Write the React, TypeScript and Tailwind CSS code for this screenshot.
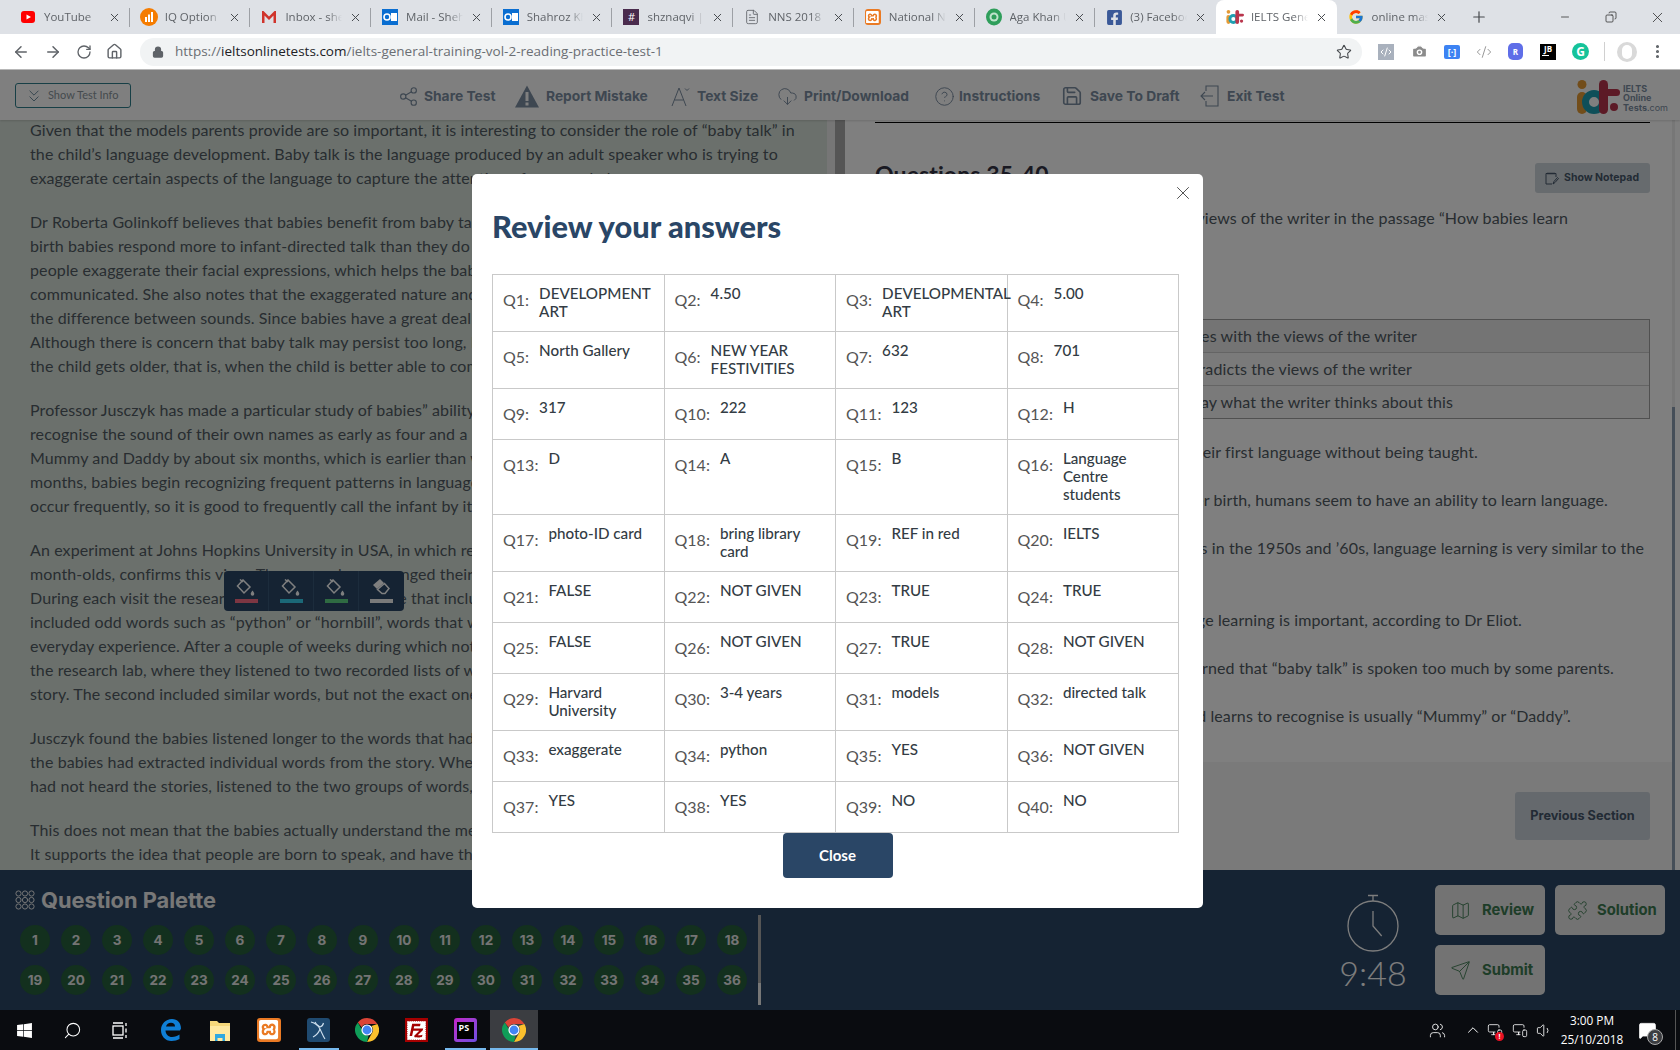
import React from 'react';
import { ArrowLeft, ArrowRight, RotateCw, Home, Star, Lock, Plus, X, Minus, Share2, CloudDownload, HelpCircle, Save, ChevronsDown, Map as MapIcon, Puzzle, Send, Camera, CodeXml, MoreVertical, Copy, ChevronUp, Volume1, Users, MonitorSmartphone, FileText, Search, MessageSquare } from 'lucide-react';
import { FaFacebookSquare, FaWindows } from 'react-icons/fa';
import { FcGoogle } from 'react-icons/fc';
import { SiXampp, SiFilezilla } from 'react-icons/si';

const YT = () => (<svg width="16" height="16" viewBox="0 0 16 16"><rect x="1" y="2" width="14" height="12" rx="3" fill="#f00" /><path d="M6.5 5.5 11 8l-4.5 2.5z" fill="#fff" /></svg>);
const IQ = () => (<svg width="18" height="18" viewBox="0 0 18 18"><circle cx="9" cy="9" r="9" fill="#f57c00" /><rect x="5" y="9" width="2" height="5" fill="#fff" /><rect x="8" y="6.5" width="2" height="7.5" fill="#fff" /><rect x="11" y="4" width="2" height="10" fill="#fff" /></svg>);
const GM = () => (<svg width="16" height="14" viewBox="0 0 16 14"><path d="M1 13V1h1.5L8 6.5 13.5 1H15v12h-2.5V5.5L8 10 3.500 5.500V13z" fill="#d0342c" /></svg>);
const OL = () => (<svg width="16" height="16" viewBox="0 0 16 16"><rect width="16" height="16" fill="#0a6ed1" /><rect x="9" y="4" width="6" height="8" fill="#fff" /><circle cx="5" cy="8" r="3" fill="none" stroke="#fff" strokeWidth="1.600" /></svg>);
const SL = () => (<div className="w-4 h-4 bg-[#4a2b4d] text-white text-[11px] leading-4 text-center">#</div>);
const XP = ({ s = 16 }: { s?: number }) => (<div className="rounded-[3px] bg-[#ea7a24] flex items-center justify-center text-white" style={{ width: s, height: s }}><SiXampp size={s * 0.8} /></div>);
const AK = () => (<svg width="16" height="18" viewBox="0 0 16 18"><ellipse cx="8" cy="9" rx="8" ry="8.500" fill="#2f9e5b" /><circle cx="8" cy="9" r="4.500" fill="#bfe3cc" /><circle cx="8" cy="9" r="2.500" fill="#2f9e5b" /></svg>);
const IOT = ({ s = 16 }: { s?: number }) => (
  <svg width={s} height={s * 34 / 44} viewBox="0 0 44 34">
    <circle cx="6" cy="4.500" r="4.500" fill="#e59a35" />
    <rect x="1" y="12" width="10" height="22" rx="5" fill="#e59a35" />
    <circle cx="18" cy="22" r="8.500" fill="none" stroke="#1f9fb2" strokeWidth="7" />
    <rect x="23" y="0" width="9" height="34" rx="4.500" fill="#b9354c" />
    <rect x="27" y="9" width="17" height="7" rx="3.500" fill="#b9354c" />
    <circle cx="38" cy="27" r="4" fill="#b9354c" />
  </svg>
);
const ChromeLogo = ({ s = 24 }: { s?: number }) => (
  <svg width={s} height={s} viewBox="0 0 24 24">
    <path d="M12 0a12 12 0 0 1 10.400 6H12a6 6 0 0 0-5.300 3.200L2.800 4.400A12 12 0 0 1 12 0z" fill="#db4437" />
    <path d="M22.400 6A12 12 0 0 1 12 24l4.900-8.700A6 6 0 0 0 16.500 8z" fill="#fbc02d" />
    <path d="M12 24A12 12 0 0 1 2.800 4.400l4.900 8.700a6 6 0 0 0 5.800 4.700z" fill="#0f9d58" />
    <circle cx="12" cy="12" r="5" fill="#4285f4" stroke="#fff" strokeWidth="1.200" />
  </svg>
);

const tabs: [string, React.ReactNode][] = [
  ['YouTube', <YT />], ['IQ Option', <IQ />], ['Inbox - shehroz', <GM />], ['Mail - Shehroz', <OL />], ['Shahroz Khan', <OL />], ['shznaqvi | Jira', <SL />],
  ['NNS 2018 report', <FileText size={16} strokeWidth={1.300} className="text-[#5f6368]" />], ['National NNS', <XP />], ['Aga Khan Uni', <AK />], ['(3) Facebook', <FaFacebookSquare size={17} className="text-[#3b5998]" />], ['IELTS General', <IOT s={18} />], ['online mastering', <FcGoogle size={16} />],
];

function Tab({ title, icon, active, last }: { title: string; icon: React.ReactNode; active: boolean; last: boolean }) {
  return (
    <div className={`relative flex items-center h-[34px] w-[120.700px] shrink-0 pl-[10px] pr-[9px] gap-[7px] ${active ? 'bg-white rounded-t-[8px]' : ''}`}>
      <div className="w-[18px] flex justify-center shrink-0">{icon}</div>
      <div className="flex-1 min-w-0 overflow-hidden whitespace-nowrap text-[11.500px] text-[#5f6368] [mask-image:linear-gradient(to_right,black_75%,transparent_100%)]">{title}</div>
      <X size={13} strokeWidth={1.800} className="text-[#45484c] shrink-0" />
      {!active && !last && <div className="absolute right-0 top-[8px] h-[19px] w-px bg-[#9da0a5]" />}
    </div>
  );
}

function TabStrip() {
  return (
    <div className="h-[34px] bg-[#dee1e6] flex items-center pl-[9px] font-['Open_Sans',sans-serif]">
      {tabs.map(([t, i], n) => <Tab key={n} title={t} icon={i} active={n === 10} last={n === 9 || n === 11} />)}
      <Plus size={18} strokeWidth={1.600} className="text-[#45484c] ml-[13px]" />
      <div className="ml-auto flex items-center text-[#2b2b2b]">
        <div className="w-[46px] flex justify-center"><Minus size={12} strokeWidth={1.500} /></div>
        <div className="w-[46px] flex justify-center"><Copy size={12} strokeWidth={1.500} className="-scale-x-100" /></div>
        <div className="w-[46px] flex justify-center"><X size={17} strokeWidth={1.100} /></div>
      </div>
    </div>
  );
}

function AddressBar() {
  return (
    <div className="h-[36px] bg-white flex items-center font-['Open_Sans',sans-serif] text-[#5f6368] border-b border-[#b9b9b9]">
      <div className="w-[140px] flex items-center pl-[12px] gap-[14px]">
        <ArrowLeft size={18} /><ArrowRight size={18} /><RotateCw size={16} /><Home size={17} />
      </div>
      <div className="w-[1222px] h-[28px] rounded-full bg-[#f1f3f4] flex items-center pl-[12px] pr-[10px]">
        <Lock size={12} strokeWidth={2.500} fill="#5f6368" />
        <div className="ml-[11px] text-[13.500px] whitespace-nowrap text-[#6a6e73]">https://<span className="text-[#202124]">ieltsonlinetests.com</span>/ielts-general-training-vol-2-reading-practice-test-1</div>
        <Star size={16} strokeWidth={1.600} className="ml-auto text-[#45484c]" />
      </div>
      <div className="flex items-center ml-[16px] h-full">
        <div className="w-[16px] h-[16px] bg-[#a9b1bd] text-white flex items-center justify-center"><CodeXml size={12} /></div>
        <div className="ml-[17px] w-[17px]"><Camera size={17} fill="#8b8b8b" stroke="#fff" className="text-white" /></div>
        <div className="ml-[16px] w-[16px] h-[14px] rounded-[2px] bg-[#3d83f3] text-white text-[9px] leading-[14px] text-center font-bold">[·]</div>
        <CodeXml size={16} strokeWidth={1.200} className="ml-[16px] text-[#7d7d7d]" />
        <div className="ml-[16px] w-[15px] h-[17px] rounded-[5px] bg-[#5f6ee8] text-white text-[8px] leading-[17px] text-center font-bold">R</div>
        <div className="ml-[17px] w-[16px] h-[16px] bg-black text-white text-[8px] leading-[10px] text-center font-bold">JB<div className="w-[7px] h-px bg-white ml-[2px] mt-[1px]" /></div>
        <div className="ml-[16px] w-[17px] h-[17px] rounded-full bg-[#15c39a] text-white text-[12px] leading-[17px] text-center font-bold">G</div>
        <div className="ml-[15px] w-px h-[19px] bg-[#d0d0d0]" />
        <div className="ml-[12px] w-[20px] h-[20px] rounded-full bg-[#d9d9d9] flex items-center justify-center"><div className="w-[10px] h-[14px] rounded-full bg-white" /></div>
        <MoreVertical size={17} strokeWidth={2.400} className="ml-[12px] text-[#5f6368]" />
      </div>
    </div>
  );
}

const hdrText = "text-[13.800px] font-bold text-[#7c8ea2] whitespace-nowrap";

function TriangleIcon() {
  return (<svg width="24" height="23" viewBox="0 0 24 23"><path d="M12 0.500 24 22.500H0z" fill="#7c8ea2" /><rect x="10.500" y="7" width="3" height="9" fill="#fff" /><rect x="10.500" y="17.500" width="3" height="3" fill="#fff" /></svg>);
}
function TextSizeIcon() {
  return (<svg width="20" height="22" viewBox="0 0 20 22" fill="none" stroke="#7c8ea2" strokeWidth="1"><path d="M1 21 8 3l7 18M3.500 15h9" /><path d="M14 3.500 16 5.500 18 3.500" /></svg>);
}
function ExitIcon() {
  return (<svg width="19" height="22" viewBox="0 0 19 22" fill="none" stroke="#7c8ea2" strokeWidth="1.100"><path d="M6 6V1h12v20H6v-5" /><path d="M13 11H1M5 7l-4 4 4 4" /></svg>);
}

const actions: [string, string, React.ReactNode][] = [
  ['Share Test', 'w-[117px] gap-[5px]', <Share2 size={21} strokeWidth={1.300} className="text-[#7c8ea2]" />],
  ['Report Mistake', 'w-[156px] gap-[7px] pt-[1px]', <TriangleIcon />],
  ['Text Size', 'w-[106px] gap-[6px]', <TextSizeIcon />],
  ['Print/Download', 'w-[157px] gap-[6px]', <CloudDownload size={21} strokeWidth={1.100} className="text-[#7c8ea2]" />],
  ['Instructions', 'w-[127px] gap-[4px]', <HelpCircle size={21} strokeWidth={1.100} className="text-[#7c8ea2]" />],
  ['Save To Draft', 'w-[139px] gap-[7px]', <Save size={22} strokeWidth={1.800} className="text-[#7c8ea2]" />],
  ['Exit Test', 'w-[95px] gap-[8px]', <ExitIcon />],
];

function TestHeader() {
  return (
    <div className="h-[50px] bg-white flex items-center pl-[15px] font-['Inter',sans-serif] shadow-[0_1px_2px_rgba(0,0,0,0.15)] z-10">
      <div className="w-[116px] h-[25px] mt-[1px] border border-[#2f7f8c] rounded-[3px] flex items-center pl-[8px] gap-[4px] text-[11px] text-[#8a959c] font-['Lato',sans-serif]">
        <ChevronsDown size={20} strokeWidth={1.200} className="text-[#6f8ea0]" />Show Test Info
      </div>
      <div className="flex items-center ml-[267px] mt-[2px]">
        {actions.map(([t, c, i]) => <div key={t} className={`flex items-center shrink-0 ${c}`}>{i}<span className={hdrText}>{t}</span></div>)}
      </div>
      <div className="ml-auto pr-[12px] flex items-center gap-[3px] mt-[3px]">
        <IOT s={44} />
        <div className="text-[#7c8ea2] text-[9px] leading-[9.500px] font-bold pt-[3px]">IELTS<br />Online<br />Tests<span className="font-normal">.com</span></div>
      </div>
    </div>
  );
}

const passage: string[][] = [
  ['Given that the models parents provide are so important, it is interesting to consider the role of “baby talk” in', 'the child’s language development. Baby talk is the language produced by an adult speaker who is trying to', 'exaggerate certain aspects of the language to capture the attention of a young baby.'],
  ['Dr Roberta Golinkoff believes that babies benefit from baby talk because it is easier for them to follow. From', 'birth babies respond more to infant-directed talk than they do to adult-directed talk. When using baby talk,', 'people exaggerate their facial expressions, which helps the baby to begin to associate what is being', 'communicated. She also notes that the exaggerated nature and repetition of baby talk helps infants to learn', 'the difference between sounds. Since babies have a great deal of information to process, baby talk helps.', 'Although there is concern that baby talk may persist too long, Dr Golinkoff says that it stops being used as', 'the child gets older, that is, when the child is better able to communicate with the parents.'],
  ['Professor Jusczyk has made a particular study of babies” ability to recognise sounds, and says that they', 'recognise the sound of their own names as early as four and a half months. Babies know the sound of', 'Mummy and Daddy by about six months, which is earlier than was previously thought. By about eight', 'months, babies begin recognizing frequent patterns in language. A child will pick up on words that', 'occur frequently, so it is good to frequently call the infant by its name.'],
  ['An experiment at Johns Hopkins University in USA, in which researchers went to the homes of 16 nine-', 'month-olds, confirms this view. The researchers arranged their visits for ten days out of a two week period.', 'During each visit the researcher played an audio tape that included the same three stories. The stories', 'included odd words such as “python” or “hornbill”, words that were unlikely to be encountered in the babies’', 'everyday experience. After a couple of weeks during which nothing was done, the babies were brought to', 'the research lab, where they listened to two recorded lists of words. The first list included words heard in the', 'story. The second included similar words, but not the exact ones that were used in the stories.'],
  ['Jusczyk found the babies listened longer to the words that had appeared in the stories, which indicated that', 'the babies had extracted individual words from the story. When a control group of 16 nine-month-olds, who', 'had not heard the stories, listened to the two groups of words, they showed no preference.'],
  ['This does not mean that the babies actually understand the meanings of the words, just the sound patterns.', 'It supports the idea that people are born to speak, and have the capacity to learn language from birth.'],
];

const Bucket = () => (
  <svg width="20" height="19" viewBox="0 0 20 19" fill="none" stroke="#fff" strokeWidth="1.500"><path d="M7 1 1.500 7 8 14l6-6z" /><path d="M4 0.500 7 3" /><path d="M16.500 11.500c1.500 2 1.800 2.700 1.800 3.500a1.800 1.800 0 0 1-3.600 0c0-.8.300-1.500 1.800-3.500z" fill="#fff" stroke="none" /></svg>
);
const Eraser = () => (
  <svg width="20" height="19" viewBox="0 0 20 19"><path d="M8 0 1 6l4 4 7-6z" fill="#fff" /><path d="M5.500 10.500 12.500 4.500l4.500 5-4 5h-3z" fill="none" stroke="#fff" strokeWidth="1.500" /></svg>
);

function HighlightBar() {
  const items: [React.ReactNode, string][] = [[<Bucket />, 'bg-[#fb6c84]'], [<Bucket />, 'bg-[#36d0ee]'], [<Bucket />, 'bg-[#5ed684]'], [<Eraser />, 'bg-[#f4f4f4]']];
  return (
    <div className="absolute left-[224px] top-[451px] w-[180px] h-[40px] rounded-[4px] bg-[#2a4666] flex">
      {items.map(([ic, c], i) => (
        <div key={i} className={`w-[45px] h-full flex flex-col items-center pt-[8px] ${i < 3 ? 'border-r border-[#385878]' : ''}`}>
          {ic}
          <div className={`w-[23px] h-[4px] mt-[1px] ${c}`} />
        </div>
      ))}
    </div>
  );
}

function LeftPane() {
  return (
    <div className="relative w-[827px] shrink-0 bg-[#d7e1d9] overflow-hidden pl-[30px] font-['Lato',sans-serif] text-[16px] leading-[24px] tracking-[0.11px] text-[#505a62]">
      <div className="-mt-[2px] flex flex-col gap-[20px]">
        {passage.map((p, i) => (
          <div key={i}>{p.map((l, j) => <div key={j} className="whitespace-nowrap">{l}</div>)}</div>
        ))}
      </div>
      <HighlightBar />
    </div>
  );
}

const stmts: [string, string][] = [
  ['35   Children are able to learn their first language without being taught.', 'pr-[172px]'],
  ['36   From a very short time after birth, humans seem to have an ability to learn language.', 'pr-[42px]'],
  ['37   According to researchers in the 1950s and ’60s, language learning is very similar to the', 'pr-[6px]'],
  ['38   Adult attention to early language learning is important, according to Dr Eliot.', 'pr-[128px]'],
  ['39   Some experts are concerned that “baby talk” is spoken too much by some parents.', 'pr-[36px]'],
  ['40   The first word a child learns to recognise is usually “Mummy” or “Daddy”.', 'pr-[79px]'],
];

function RightPane() {
  return (
    <div className="flex-1 bg-white flex flex-col font-['Lato',sans-serif] text-[16px] leading-[24px] tracking-[0.11px] text-[#505a62] min-w-0">
      <div className="flex-1 pl-[30px] pr-[22px]">
        <div className="h-[3px] border-b border-[#000]" />
        <div className="mt-[40px] flex justify-between items-start h-[30px]">
          <div className="-mt-[4px] text-[23px] leading-[30px] font-bold text-[#334]">Questions 35-40</div>
          <div className="w-[115px] h-[30px] rounded-[3px] bg-[#cfd6dc] flex items-center pl-[10px] gap-[5px] font-['Inter',sans-serif] text-[10.500px] tracking-normal font-bold text-[#46566a]">
            <svg width="14" height="13" viewBox="0 0 14 13" fill="none" stroke="#46566a" strokeWidth="1"><path d="M11 5V1.500H1V12h6" /><path d="M3 .5v2M5 .5v2M7 .5v2M9 .5v2" /><path d="m8 12 1-2.500 3.500-4 1 1-3.500 4z" /></svg>
            Show Notepad
          </div>
        </div>
        <div className="mt-[13px] whitespace-nowrap text-right pr-[82px]">Do the following statements agree with the views of the writer in the passage “How babies learn</div>
        <div className="text-left">language”?</div>
        <div className="mt-[65px] border border-[#a0a0a0] text-right">
          <div className="h-[33px] leading-[31px] bg-[#e8e8e8] border-b border-[#c8c8c8] pr-[232px] whitespace-nowrap">if the statement agrees with the views of the writer</div>
          <div className="h-[33px] leading-[31px] bg-[#f4f4f4] border-b border-[#c8c8c8] pr-[237px] whitespace-nowrap">if the statement contradicts the views of the writer</div>
          <div className="h-[32px] leading-[31px] bg-[#f4f4f4] pr-[196px] whitespace-nowrap">if it is impossible to say what the writer thinks about this</div>
        </div>
        <div className="mt-[21px] flex flex-col gap-[24px]">
          {stmts.map(([l, c], i) => (
            <div key={i}>
              <div className={`whitespace-pre text-right ${c}`}>{l}</div>
              {i === 2 && <div>development of other skills.</div>}
            </div>
          ))}
        </div>
      </div>
      <div className="h-[108px] bg-[#f5f5f5] flex justify-end pt-[30px] pr-[22px]">
        <div className="w-[135px] h-[48px] rounded-[3px] bg-[#cbd2da] flex items-center justify-center font-['Inter',sans-serif] text-[12.700px] tracking-normal font-bold text-[#45566a]">Previous Section</div>
      </div>
    </div>
  );
}

const nums = Array.from({ length: 36 }, (_, i) => i + 1);

function Footer() {
  return (
    <div className="h-[140px] bg-[#2a4666] flex font-['Inter',sans-serif]">
      <div className="w-[761px] shrink-0">
        <div className="h-[45px] pl-[15px] flex items-center gap-[6px] pt-[15px]">
          <svg width="20" height="20" viewBox="0 0 20 20" fill="none" stroke="#ededed" strokeWidth="1">
            {[3.500, 10, 16.500].flatMap(y => [3.500, 10, 16.500].map(x => <circle key={`${x}-${y}`} cx={x} cy={y} r="2.600" />))}
          </svg>
          <span className="text-[21.800px] font-bold text-[#f0f0f0] whitespace-nowrap">Question Palette</span>
        </div>
        <div className="flex pl-[20px]">
          <div className="w-[738px] pt-[10px] flex flex-wrap content-start gap-x-[11px] gap-y-[10px]">
            {nums.map(n => (
              <div key={n} className="w-[30px] h-[30px] rounded-full bg-[#26603c] flex items-center justify-center text-[13.500px] font-bold text-[#e8e8e8]">{n}</div>
            ))}
          </div>
          <div className="w-[3px] h-[90px] bg-[#aaa] flex flex-col justify-end"><div className="h-[22px] bg-[#eee]" /></div>
        </div>
      </div>
      <div className="ml-[572px] w-[80px] flex flex-col items-center pt-[24px]">
        <svg width="54" height="58" viewBox="0 0 54 58" fill="none" stroke="#fafafa" strokeWidth="1.300">
          <circle cx="27" cy="32" r="25" /><path d="M27 7V2M22 1.500h10" /><path d="M27 17v15l8.700 10" />
        </svg>
        <div className="mt-[1px] text-[34px] leading-[40px] font-['Lato',sans-serif] font-light text-[#fafafa]">9:48</div>
      </div>
      <div className="ml-[22px] pt-[15px] grid grid-cols-[110px_110px] grid-rows-[50px_50px] gap-[10px] font-['Inter',sans-serif] text-[14.800px] font-bold text-[#3c7a50]">
        <div className="rounded-[5px] bg-[#e6e6e6] flex items-center pl-[15px] gap-[11px]"><MapIcon size={21} strokeWidth={1} />Review</div>
        <div className="rounded-[5px] bg-[#e6e6e6] flex items-center pl-[12px] gap-[9px]"><Puzzle size={21} strokeWidth={1} />Solution</div>
        <div className="rounded-[5px] bg-[#e6e6e6] flex items-center pl-[15px] gap-[11px]"><Send size={21} strokeWidth={1} />Submit</div>
      </div>
    </div>
  );
}

const rows: [string, string[]][] = [
  ['Q1', ['DEVELOPMENT', 'ART']], ['Q2', ['4.50']], ['Q3', ['DEVELOPMENTAL', 'ART']], ['Q4', ['5.00']],
  ['Q5', ['North Gallery']], ['Q6', ['NEW YEAR', 'FESTIVITIES']], ['Q7', ['632']], ['Q8', ['701']],
  ['Q9', ['317']], ['Q10', ['222']], ['Q11', ['123']], ['Q12', ['H']],
  ['Q13', ['D']], ['Q14', ['A']], ['Q15', ['B']], ['Q16', ['Language', 'Centre', 'students']],
  ['Q17', ['photo-ID card']], ['Q18', ['bring library', 'card']], ['Q19', ['REF in red']], ['Q20', ['IELTS']],
  ['Q21', ['FALSE']], ['Q22', ['NOT GIVEN']], ['Q23', ['TRUE']], ['Q24', ['TRUE']],
  ['Q25', ['FALSE']], ['Q26', ['NOT GIVEN']], ['Q27', ['TRUE']], ['Q28', ['NOT GIVEN']],
  ['Q29', ['Harvard', 'University']], ['Q30', ['3-4 years']], ['Q31', ['models']], ['Q32', ['directed talk']],
  ['Q33', ['exaggerate']], ['Q34', ['python']], ['Q35', ['YES']], ['Q36', ['NOT GIVEN']],
  ['Q37', ['YES']], ['Q38', ['YES']], ['Q39', ['NO']], ['Q40', ['NO']],
];

function Modal() {
  return (
    <div className="absolute left-[472px] top-[104px] w-[731px] h-[734px] bg-white rounded-[5px] font-['Lato',sans-serif] flex flex-col items-center">
      <X size={22} strokeWidth={1} className="absolute right-[9px] top-[8px] text-[#444]" />
      <div className="self-start pl-[20px] h-[100px] pt-[34px] text-[30.800px] leading-[38px] font-black text-[#2a4666]">Review your answers</div>
      <div className="self-start ml-[20px] w-[687px] grid grid-cols-[repeat(4,minmax(0,1fr))] border-l border-t border-[#c9c9c9]">
        {rows.map(([q, a]) => (
          <div key={q} className="flex gap-[10px] pl-[10px] pt-[10px] pb-[10px] border-r border-b border-[#c9c9c9] min-w-0">
            <div className="text-[16px] leading-[30px] text-[#555] whitespace-nowrap">{q}:</div>
            <div className="-mt-[1px] pb-[1px] text-[15.200px] leading-[18px] font-medium text-[#333c44] whitespace-nowrap">{a.map((l, i) => <div key={i}>{l}</div>)}</div>
          </div>
        ))}
      </div>
      <div className="w-[110px] h-[45px] rounded-[4px] bg-[#2a4666] text-white text-[15px] font-bold flex items-center justify-center">Close</div>
    </div>
  );
}

function Dolphin() {
  return (
    <svg width="19" height="21" viewBox="0 0 19 21" fill="none" stroke="#cfe0ee" strokeWidth="1.100"><path d="M2 2c4 1 7 3 9 7s3 7 5 10" /><path d="M6 2c1 3 3 4 5 5 2-.5 3-2 3.500-4" /><path d="M11 9c-1 3-3 6-7 8" /></svg>
  );
}

function Taskbar() {
  const tray = 'flex justify-center text-white';
  return (
    <div className="h-[40px] bg-[#0a0c10] flex items-center text-white font-['Open_Sans',sans-serif]">
      <div className="w-[48px] flex justify-center"><FaWindows size={17} /></div>
      <div className="w-[48px] flex justify-center"><Search size={19} strokeWidth={1.300} className="-scale-x-100" /></div>
      <div className="w-[48px] flex justify-center">
        <svg width="17" height="17" viewBox="0 0 17 17" fill="none" stroke="#fff" strokeWidth="1.300"><rect x="1" y="4" width="10" height="9" /><path d="M1 1h10M1 16h10M14 1v3M14 6.500v4M14 13v3" /></svg>
      </div>
      <div className="w-[2.500px]" />
      <div className="w-[49px] flex justify-center">
        <svg width="22" height="24" viewBox="0 0 22 24" fill="none"><path d="M20 12.500H5.500c.2 4 3 6.500 6.500 6.500 3 0 5.500-1 7.500-2.500v4.500c-2 1.300-5 2-8 2C5 23 1 18 1 12S5.500 1 12 1c5.500 0 9 4 9 9.500zM15 8.500C15 6 13.500 4.800 11 4.800S6.500 6.300 6 8.500z" fill="#0f7fd6" /></svg>
      </div>
      <div className="w-[49px] flex justify-center">
        <svg width="22" height="24" viewBox="0 0 22 24"><path d="M1 3h7l2 2h11v18H1z" fill="#f6d87a" /><rect x="1" y="8" width="20" height="15" fill="#ffe9a0" /><path d="M6 16h10v7h-2.500v-3h-5v3H6z" fill="#2fa8e0" /></svg>
      </div>
      <div className="w-[49px] flex justify-center"><XP s={24} /></div>
      <div className="relative w-[49px] h-full flex justify-center items-center"><div className="w-[23px] h-[24px] rounded-[3px] bg-[#1f4a70] flex items-center justify-center"><Dolphin /></div><div className="absolute bottom-0 left-[5px] w-[40px] h-[2px] bg-[#76b9ed]" /></div>
      <div className="w-[49px] flex justify-center"><ChromeLogo /></div>
      <div className="w-[49px] flex justify-center"><div className="w-[23px] h-[24px] bg-[#a50000] flex items-center justify-center text-white"><SiFilezilla size={19} /></div></div>
      <div className="relative w-[49px] h-full flex justify-center items-center">
        <div className="w-[23px] h-[24px] bg-gradient-to-br from-[#c21fc9] to-[#6b4ce0] rounded-[3px] flex items-center justify-center"><div className="w-[17px] h-[17px] bg-black text-white text-[9px] leading-[12px] font-bold pl-[2px]">PS</div></div>
        <div className="absolute bottom-0 left-[4px] w-[41px] h-[2px] bg-[#76b9ed]" />
      </div>
      <div className="relative w-[48px] h-full bg-[#3b3d41] flex justify-center items-center"><ChromeLogo /><div className="absolute bottom-0 inset-x-0 h-[2px] bg-[#76b9ed]" /></div>
      <div className="ml-auto flex items-center">
        <div className={`w-[36px] ${tray}`}><Users size={17} strokeWidth={1.200} /></div>
        <div className={`ml-[6px] w-[24px] ${tray}`}><ChevronUp size={18} strokeWidth={1.300} /></div>
        <div className={`w-[20px] ${tray} relative`}><MonitorSmartphone size={16} strokeWidth={1.200} /><div className="absolute right-[1px] bottom-[-3px] w-[9px] h-[9px] rounded-full bg-[#e81123] text-[7px] leading-[9px] text-center font-bold">!</div></div>
        <div className={`ml-[3px] w-[24px] ${tray}`}><MonitorSmartphone size={16} strokeWidth={1.200} /></div>
        <div className={`w-[24px] ${tray}`}><Volume1 size={17} strokeWidth={1.200} /></div>
        <div className="w-[72px] text-center text-[11.800px] leading-[19px]">3:00 PM<br />25/10/2018</div>
        <div className="w-[38px] flex justify-center relative"><MessageSquare size={19} fill="#fff" strokeWidth={1} /><div className="absolute left-[19px] top-[8px] w-[16px] h-[16px] rounded-full bg-[#3b3d41] border border-[#aaa] text-[10px] leading-[14px] text-center">8</div></div>
        <div className="ml-[9px] w-px h-[40px] bg-[#555]" />
        <div className="w-[4px]" />
      </div>
    </div>
  );
}

export default function App() {
  return (
    <div className="w-[1680px] h-[1050px] flex flex-col overflow-hidden bg-white">
      <TabStrip />
      <AddressBar />
      <div className="relative h-[940px] flex flex-col">
        <TestHeader />
        <div className="h-[750px] flex overflow-hidden">
          <LeftPane />
          <div className="w-[8px] bg-[#ececec]" />
          <div className="w-[10px] bg-[#aaa]" />
          <RightPane />
          <div className="w-[8px] bg-white"><div className="w-[3px] h-full bg-[#eee] flex flex-col justify-end"><div className="h-[463px] bg-[#8a9cb0]" /></div></div>
        </div>
        <Footer />
        <div className="absolute inset-0 bg-black/50 z-20" />
        <div className="z-30"><Modal /></div>
      </div>
      <Taskbar />
    </div>
  );
}
